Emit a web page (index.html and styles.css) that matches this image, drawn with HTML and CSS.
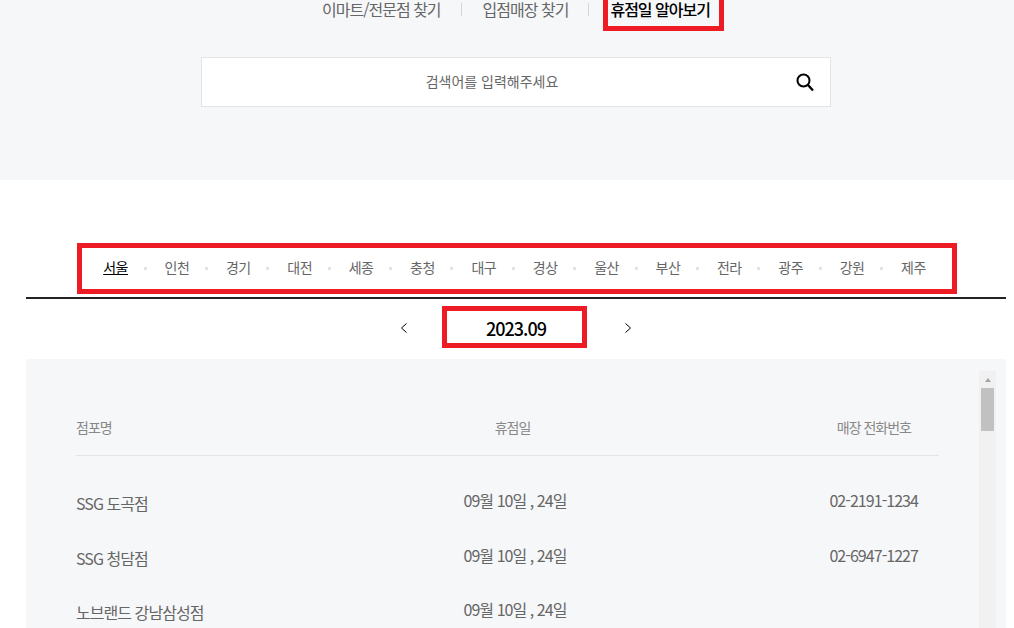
FILE: index.html
```html
<!DOCTYPE html>
<html lang="ko">
    <head>
        <meta charset="utf-8">
        <link rel="stylesheet" href="styles.css">
        <title>휴점일 알아보기</title>
    </head>
    <body>
        <div class="top">
            <ul class="tabs">
                <li><a href="#">이마트/전문점 찾기</a></li>
                <li><a href="#">입점매장 찾기</a></li>
                <li><a class="active" href="#">휴점일 알아보기</a></li>
            </ul>
            <div class="search">
                <span class="search-text">검색어를 입력해주세요</span>
                <svg class="search-icon" width="20" height="20" viewBox="0 0 20 20">
                    <circle cx="8.5" cy="8.5" r="6" fill="none" stroke="#000" stroke-width="2"/>
                    <path d="M13 13l5 5.5" fill="none" stroke="#000" stroke-width="2.4"/>
                </svg>
            </div>
        </div>

        <div class="content">
            <ol class="regions">
                <li><a class="active" href="#">서울</a></li>
                <li><a href="#">인천</a></li>
                <li><a href="#">경기</a></li>
                <li><a href="#">대전</a></li>
                <li><a href="#">세종</a></li>
                <li><a href="#">충청</a></li>
                <li><a href="#">대구</a></li>
                <li><a href="#">경상</a></li>
                <li><a href="#">울산</a></li>
                <li><a href="#">부산</a></li>
                <li><a href="#">전라</a></li>
                <li><a href="#">광주</a></li>
                <li><a href="#">강원</a></li>
                <li><a href="#">제주</a></li>
            </ol>

            <div class="month">
                <svg width="6" height="10" viewBox="0 0 6 10"><path d="M5.5 .5l-5 4.5 5 4.5" fill="none" stroke="#000"/></svg>
                <strong class="month-label">2023.09</strong>
                <svg width="6" height="10" viewBox="0 0 6 10"><path d="M.5 .5l5 4.5-5 4.5" fill="none" stroke="#000"/></svg>
            </div>

            <div class="panel">
                <div class="list">
                    <div class="row head">
                        <span>점포명</span>
                        <span>휴점일</span>
                        <span>매장 전화번호</span>
                    </div>
                    <div class="row">
                        <span class="name">SSG 도곡점</span>
                        <span>09월 10일 , 24일</span>
                        <span>02-2191-1234</span>
                    </div>
                    <div class="row">
                        <span class="name">SSG 청담점</span>
                        <span>09월 10일 , 24일</span>
                        <span>02-6947-1227</span>
                    </div>
                    <div class="row">
                        <span class="name">노브랜드 강남삼성점</span>
                        <span>09월 10일 , 24일</span>
                        <span></span>
                    </div>
                </div>
                <div class="scrollbar">
                    <div class="scroll-up"></div>
                    <div class="scroll-thumb"></div>
                </div>
            </div>
        </div>

        <!-- red marks drawn over the capture -->
        <div class="mark mark-tab"></div>
        <div class="mark mark-regions"></div>
        <div class="mark mark-month"></div>
    </body>
</html>
```

FILE: styles.css
```css
html {
    height: 100%;
}
body {
    margin: 0;
    height: 628px;
    overflow: hidden;
    position: relative;
    background-color: #fff;
    color: #666;
    font-family: "Noto Sans CJK KR", "Noto Sans", sans-serif;
    letter-spacing: -0.5px;
}
a {
    color: inherit;
    text-decoration: none;
}
ul, ol {
    list-style-type: none;
    margin: 0;
    padding: 0;
}

.top {
    background-color: #f6f7f9;
    height: 180px;
    box-sizing: border-box;
    padding-left: 201px;
}
.tabs {
    display: flex;
    height: 57px;
    width: 630px;
    justify-content: center;
    font-size: 16px;
    letter-spacing: -1px;
    line-height: 18px;
}
.tabs li {
    height: 20px;
    display: flex;
    align-items: flex-start;
}
.tabs li + li::before {
    content: "";
    width: 1px;
    height: 13px;
    margin: 3px 21px 0 20px;
    background-color: #d5d6d8;
}
.tabs .active {
    color: #000;
    font-weight: 500;
}

.search {
    width: 630px;
    height: 50px;
    box-sizing: border-box;
    background-color: #fff;
    border: 1px solid #e3e4e6;
    display: flex;
    align-items: center;
    padding: 0 15px 0 0;
}
.search-text {
    flex: 1;
    text-align: center;
    font-size: 14px;
    letter-spacing: 0;
    padding-right: 13px;
    padding-bottom: 3px;
}

.content {
    padding: 0 8px 0 26px;
}
.regions {
    display: flex;
    justify-content: center;
    padding-top: 77px;
    padding-right: 3px;
    height: 40px;
    border-bottom: 2px solid #222;
    font-size: 14px;
    line-height: 20px;
}
.regions li {
    display: flex;
}
.regions li + li::before {
    content: "";
    width: 3px;
    height: 3px;
    margin: 10px 17.38px 0 15px;
    background-color: #e3e3e3;
}
.regions a {
    width: 26px;
    height: 20px;
    text-align: center;
    white-space: nowrap;
}
.regions .active {
    color: #000;
    text-decoration: underline;
}

.month {
    display: flex;
    justify-content: center;
    align-items: center;
    height: 58px;
    padding-bottom: 2px;
    gap: 79px;
}
.month-label {
    color: #000;
    font-size: 18px;
    font-weight: 500;
    letter-spacing: -1px;
}

.panel {
    background-color: #f6f7f9;
    height: 269px;
    display: flex;
    padding: 12px 10px 0 50px;
}
.list {
    width: 863px;
    margin-right: 40px;
    font-size: 16px;
    letter-spacing: -0.95px;
}
.row {
    display: grid;
    grid-template-columns: 1fr 1fr 1fr;
    height: 54.5px;
    align-items: center;
}
.row span:nth-child(2) {
    text-align: center;
    padding-left: 15px;
}
.row span:nth-child(3) {
    text-align: right;
    padding-right: 21px;
}
.row.head {
    height: 85px;
    padding-top: 46px;
    box-sizing: border-box;
    align-items: start;
    font-size: 14px;
    letter-spacing: -1px;
    line-height: 20px;
    color: #888;
    border-bottom: 1px solid #e3e4e6;
    margin-bottom: 16.8px;
}
.row.head span:nth-child(2) {
    padding-left: 10px;
}
.row.head span:nth-child(3) {
    padding-right: 28px;
}
.row .name {
    padding-top: 6px;
}

.scrollbar {
    width: 17px;
    background-color: #f1f1f1;
}
.scroll-up {
    width: 0;
    height: 0;
    margin: 7px auto 6px;
    border: 3.5px solid transparent;
    border-top: 0;
    border-bottom: 4px solid #a3a3a3;
}
.scroll-thumb {
    width: 13px;
    height: 43px;
    margin: 0 auto;
    background-color: #c1c1c1;
}

.mark {
    position: absolute;
    box-sizing: border-box;
    border: 5px solid #ed1c24;
}
.mark-tab {
    left: 603px;
    top: -10px;
    width: 121px;
    height: 41px;
}
.mark-regions {
    left: 77px;
    top: 243px;
    width: 880px;
    height: 51px;
}
.mark-month {
    left: 442px;
    top: 306px;
    width: 145px;
    height: 42px;
}
```
